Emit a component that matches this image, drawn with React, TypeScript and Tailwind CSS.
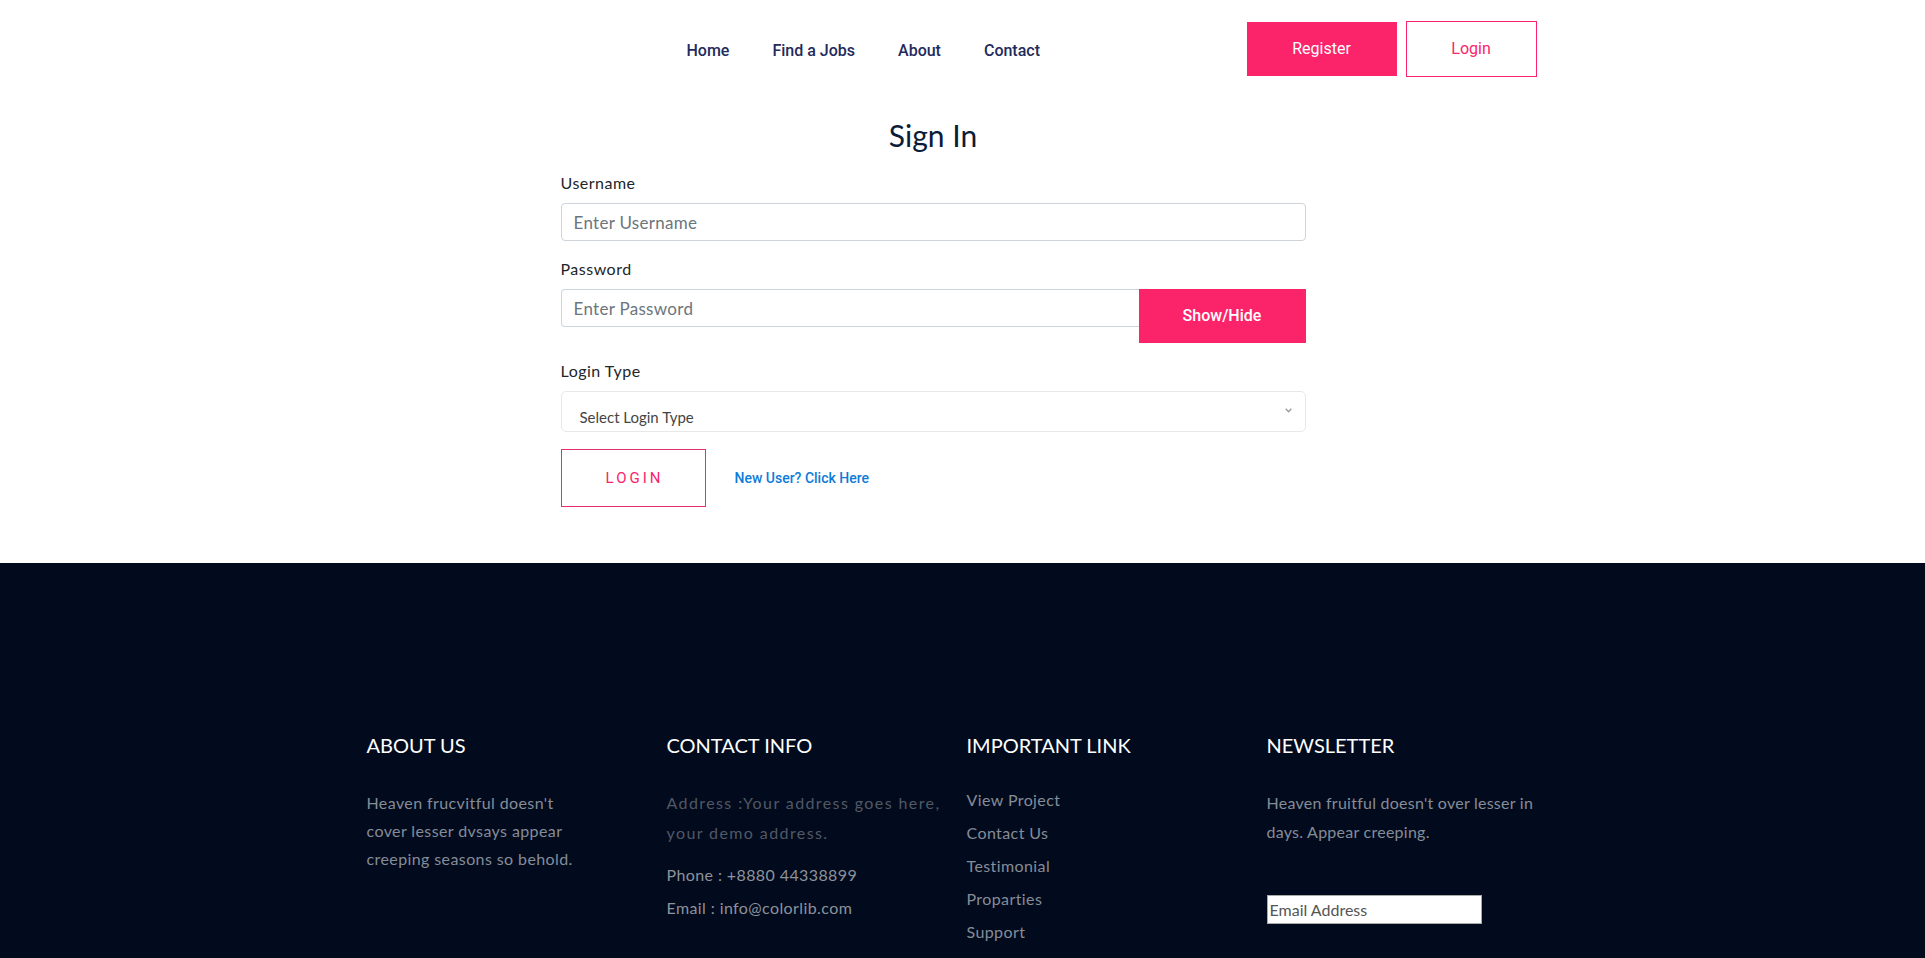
import React from "react";

const navItems = ["Home", "Find a Jobs", "About", "Contact"];
const importantLinks = ["View Project", "Contact Us", "Testimonial", "Proparties", "Support"];

// the reference page is laid out 11px left of centre (scrollbar takes 22px of the window)
const container = "ml-[calc(50%-611px)] w-[1200px]";

function Header() {
    return (
        <header className="h-[98px]">
            <div className={`${container} flex h-full items-center px-[15px]`}>
                <nav className="ml-[320px] flex items-center gap-[43px] pt-[4px] font-['Roboto',sans-serif] text-[16px] font-medium text-[#232a5c]">
                    {navItems.map((item) => (
                        <a key={item} href="#" className="leading-[24px]">
                            {item}
                        </a>
                    ))}
                </nav>
                <div className="ml-auto flex items-center gap-[9px] font-['Roboto',sans-serif] text-[16px]">
                    <a href="#" className="flex h-[54px] w-[150px] items-center justify-center bg-[#fb246a] text-white">
                        Register
                    </a>
                    <a
                        href="#"
                        className="flex h-[56px] w-[131px] items-center justify-center border border-[#fb246a] text-[#fb246a]"
                    >
                        Login
                    </a>
                </div>
            </div>
        </header>
    );
}

function SignInForm() {
    return (
        <main className="pb-[56px]">
            <div className={container}>
                <form className="ml-[209px] w-[745px] pt-[19px]" onSubmit={(e) => e.preventDefault()}>
                    <h2 className="text-center text-[30px] leading-[36px] font-normal text-[#0b1c39]">Sign In</h2>

                    <label className="mt-[18px] block text-[16px] leading-[24px] tracking-[0.5px] text-[#212529]">
                        Username
                    </label>
                    <input
                        type="text"
                        placeholder="Enter Username"
                        className="mt-[8px] block h-[38px] w-full rounded-[4px] border border-[#ced4da] px-[12px] text-[17px] tracking-[0.3px] text-[#495057] outline-none placeholder:text-[#6c757d]"
                    />

                    <label className="mt-[16px] block text-[16px] leading-[24px] tracking-[0.5px] text-[#212529]">
                        Password
                    </label>
                    <div className="mt-[8px] flex items-start">
                        <input
                            type="password"
                            placeholder="Enter Password"
                            className="block h-[38px] min-w-0 flex-1 rounded-l-[4px] border border-r-0 border-[#ced4da] px-[12px] text-[17px] tracking-[0.3px] text-[#495057] outline-none placeholder:text-[#6c757d]"
                        />
                        <button
                            type="button"
                            className="h-[54px] w-[167px] bg-[#fb246a] font-['Roboto',sans-serif] text-[16px] font-medium text-white"
                        >
                            Show/Hide
                        </button>
                    </div>

                    <label className="mt-[16px] block text-[16px] leading-[24px] tracking-[0.5px] text-[#212529]">
                        Login Type
                    </label>
                    <div className="relative mt-[8px] h-[41px] w-full rounded-[5px] border border-[#e8e8e8] pl-[18px] pt-[15px]">
                        <span className="block text-[15px] leading-[20px] text-[#444]">Select Login Type</span>
                        <svg
                            className="absolute right-[13px] top-[16px]"
                            width="7"
                            height="5"
                            viewBox="0 0 7 5"
                            fill="none"
                            stroke="#999"
                            strokeWidth="1.3"
                        >
                            <path d="M0.7 0.8 L3.5 3.8 L6.3 0.8" />
                        </svg>
                    </div>

                    <div className="mt-[17px] flex items-center">
                        <button
                            type="submit"
                            className="h-[58px] w-[145px] border border-[#ea2d6c] pl-[3px] font-['Roboto',sans-serif] text-[15px] tracking-[3px] text-[#fb246a]"
                        >
                            LOGIN
                        </button>
                        <a href="#" className="ml-[29px] font-['Roboto',sans-serif] text-[14px] font-medium text-[#0d7bd8]">
                            New User? Click Here
                        </a>
                    </div>
                </form>
            </div>
        </main>
    );
}

function Footer() {
    return (
        <footer className="min-h-[1180px] bg-[#010b1d] pt-[170px] tracking-[0.4px]">
            <div className={`${container} grid grid-cols-4`}>
                <div className="px-[15px]">
                    <h4 className="text-[20px] leading-[24px] font-normal tracking-normal text-white">ABOUT US</h4>
                    <p className="mt-[32px] max-w-[215px] text-[16px] leading-[28px] text-[#868c98]">
                        Heaven frucvitful doesn't cover lesser dvsays appear creeping seasons so behold.
                    </p>
                </div>

                <div className="px-[15px]">
                    <h4 className="text-[20px] leading-[24px] font-normal tracking-normal text-white">CONTACT INFO</h4>
                    <p className="mt-[31px] w-[290px] text-[16px] leading-[30px] tracking-[1.4px] text-[#515866]">
                        Address :Your address goes here, your demo address.
                    </p>
                    <p className="mt-[12px] text-[16px] leading-[30px] text-[#8d929b]">Phone : +8880 44338899</p>
                    <p className="mt-[3px] text-[16px] leading-[30px] text-[#8d929b]">Email : info@colorlib.com</p>
                </div>

                <div className="px-[15px]">
                    <h4 className="text-[20px] leading-[24px] font-normal tracking-normal text-white">IMPORTANT LINK</h4>
                    <ul className="mt-[26px]">
                        {importantLinks.map((link) => (
                            <li key={link} className="text-[16px] leading-[33px] text-[#868c98]">
                                <a href="#">{link}</a>
                            </li>
                        ))}
                    </ul>
                </div>

                <div className="px-[15px]">
                    <h4 className="text-[20px] leading-[24px] font-normal tracking-normal text-white">NEWSLETTER</h4>
                    <p className="mt-[31px] text-[16px] leading-[29px] tracking-[0.25px] text-[#868c98]">
                        Heaven fruitful doesn't over lesser in days. Appear creeping.
                    </p>
                    <input
                        type="email"
                        placeholder="Email Address"
                        className="mt-[49px] block h-[29px] w-[215px] border border-[#a9a9a9] bg-white px-[2px] text-[16px] tracking-normal outline-none placeholder:text-[#555]"
                    />
                </div>
            </div>
        </footer>
    );
}

export default function App() {
    return (
        <div className="min-h-screen bg-white font-['Lato','Open_Sans',sans-serif]">
            <Header />
            <SignInForm />
            <Footer />
        </div>
    );
}
